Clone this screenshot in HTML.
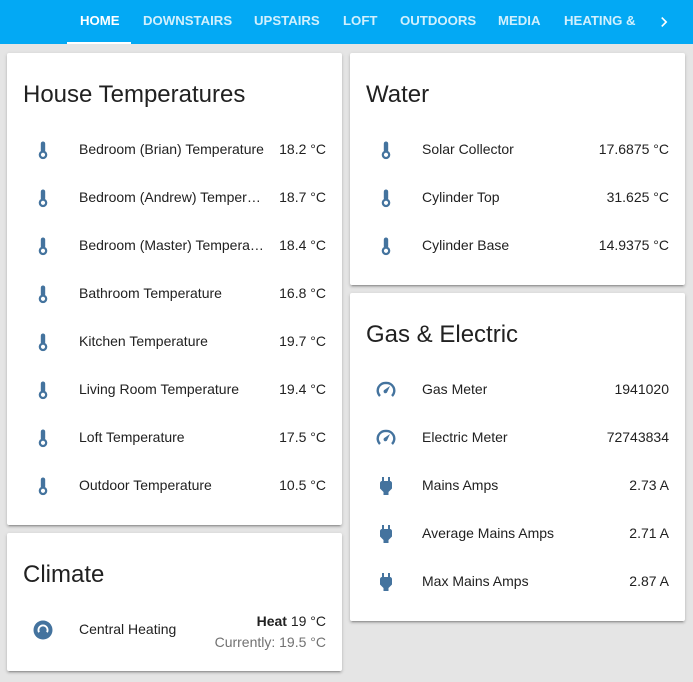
<!DOCTYPE html>
<html><head><meta charset="utf-8"><style>
*{box-sizing:border-box;margin:0;padding:0}
body{width:693px;height:682px;background:#e5e5e5;font-family:"Liberation Sans",sans-serif;position:relative;overflow:hidden;color:#212121}
.hdr{position:absolute;left:0;top:0;width:693px;height:44px;background:#03a9f4}
.tab{position:absolute;top:1px;height:44px;line-height:40px;font-size:13.2px;font-weight:bold;color:rgba(255,255,255,0.82)}
.tab.on{color:#fff}
.ul{position:absolute;left:67px;top:42px;width:64px;height:2px;background:#fff}
.card{position:absolute;background:#fff;border-radius:2px;box-shadow:0 2px 2px rgba(0,0,0,.14),0 1px 4px rgba(0,0,0,.12),0 3px 1px -2px rgba(0,0,0,.2)}
.title{position:absolute;left:16px;font-size:24px;color:#212121}
.row{position:absolute;left:0;right:0;height:40px}
.row svg{position:absolute;left:24px;top:9px}
.nm{position:absolute;left:72px;top:12px;font-size:14px;white-space:nowrap;overflow:hidden;text-overflow:ellipsis}
.val{position:absolute;right:16px;top:12px;font-size:14px}
</style></head><body>
<div class="hdr">
<div class="tab on" style="left:80px">HOME</div>
<div class="tab" style="left:143px">DOWNSTAIRS</div>
<div class="tab" style="left:254px">UPSTAIRS</div>
<div class="tab" style="left:343px">LOFT</div>
<div class="tab" style="left:400px">OUTDOORS</div>
<div class="tab" style="left:498px">MEDIA</div>
<div class="tab" style="left:564px">HEATING &amp;</div>
<svg style="position:absolute;left:654px;top:12px" width="20" height="20" viewBox="0 0 24 24"><path d="M8.6 16.6L13.2 12 8.6 7.4 10 6l6 6-6 6z" fill="#fff"/></svg>
<div class="ul"></div>
</div>

<svg width="0" height="0" style="position:absolute"><defs>
<symbol id="th" viewBox="0 0 24 24"><rect x="9.8" y="3.5" width="4.4" height="11" rx="2.2" fill="#44739e"/><circle cx="12" cy="16.8" r="3.2" fill="#fff" stroke="#44739e" stroke-width="2.2"/></symbol>
<symbol id="ga" viewBox="0 0 24 24"><path d="M6 18A7.6 7.6 0 0 1 12 5a7.6 7.6 0 0 1 6 13" fill="none" stroke="#44739e" stroke-width="2.4"/><path d="M16 8L10.8 11.6a1.9 1.9 0 1 0 2.4 2.5z" fill="#44739e"/></symbol>
<symbol id="pl" viewBox="0 0 24 24"><path d="M16 7V3h-2v4h-4V3H8v4c-1 0-2 1-2 2v5.5L9.5 18v3h5v-3l3.5-3.5V9c0-1-1-2-2-2z" fill="#44739e"/></symbol>
<symbol id="cl" viewBox="0 0 24 24"><circle cx="12" cy="12" r="9.5" fill="#44739e"/><path d="M12 6.5a5.5 5.5 0 0 0-4.8 8.2l1.6-1A3.6 3.6 0 0 1 12 8.4a3.6 3.6 0 0 1 3.2 5.3l1.6 1A5.5 5.5 0 0 0 12 6.5z" fill="#fff"/></symbol>
</defs></svg>

<div class="card" style="left:7px;top:53px;width:335px;height:472px">
<div class="title" style="top:28px">House Temperatures</div>
<div class="row" style="top:76px"><svg width="24" height="24"><use href="#th"/></svg><div class="nm">Bedroom (Brian) Temperature</div><div class="val">18.2 °C</div></div>
<div class="row" style="top:124px"><svg width="24" height="24"><use href="#th"/></svg><div class="nm" style="width:188px">Bedroom (Andrew) Temperature</div><div class="val">18.7 °C</div></div>
<div class="row" style="top:172px"><svg width="24" height="24"><use href="#th"/></svg><div class="nm" style="width:188px">Bedroom (Master) Temperature</div><div class="val">18.4 °C</div></div>
<div class="row" style="top:220px"><svg width="24" height="24"><use href="#th"/></svg><div class="nm">Bathroom Temperature</div><div class="val">16.8 °C</div></div>
<div class="row" style="top:268px"><svg width="24" height="24"><use href="#th"/></svg><div class="nm">Kitchen Temperature</div><div class="val">19.7 °C</div></div>
<div class="row" style="top:316px"><svg width="24" height="24"><use href="#th"/></svg><div class="nm">Living Room Temperature</div><div class="val">19.4 °C</div></div>
<div class="row" style="top:364px"><svg width="24" height="24"><use href="#th"/></svg><div class="nm">Loft Temperature</div><div class="val">17.5 °C</div></div>
<div class="row" style="top:412px"><svg width="24" height="24"><use href="#th"/></svg><div class="nm">Outdoor Temperature</div><div class="val">10.5 °C</div></div>
</div>

<div class="card" style="left:7px;top:533px;width:335px;height:138px">
<div class="title" style="top:28px">Climate</div>
<div class="row" style="top:76px"><svg width="24" height="24"><use href="#cl"/></svg><div class="nm">Central Heating</div>
<div class="val" style="top:4px"><b>Heat</b> 19 °C</div>
<div class="val" style="top:25px;color:#727272">Currently: 19.5 °C</div></div>
</div>

<div class="card" style="left:350px;top:53px;width:335px;height:232px">
<div class="title" style="top:28px">Water</div>
<div class="row" style="top:76px"><svg width="24" height="24"><use href="#th"/></svg><div class="nm">Solar Collector</div><div class="val">17.6875 °C</div></div>
<div class="row" style="top:124px"><svg width="24" height="24"><use href="#th"/></svg><div class="nm">Cylinder Top</div><div class="val">31.625 °C</div></div>
<div class="row" style="top:172px"><svg width="24" height="24"><use href="#th"/></svg><div class="nm">Cylinder Base</div><div class="val">14.9375 °C</div></div>
</div>

<div class="card" style="left:350px;top:293px;width:335px;height:328px">
<div class="title" style="top:28px">Gas &amp; Electric</div>
<div class="row" style="top:76px"><svg width="24" height="24"><use href="#ga"/></svg><div class="nm">Gas Meter</div><div class="val">1941020</div></div>
<div class="row" style="top:124px"><svg width="24" height="24"><use href="#ga"/></svg><div class="nm">Electric Meter</div><div class="val">72743834</div></div>
<div class="row" style="top:172px"><svg width="24" height="24"><use href="#pl"/></svg><div class="nm">Mains Amps</div><div class="val">2.73 A</div></div>
<div class="row" style="top:220px"><svg width="24" height="24"><use href="#pl"/></svg><div class="nm">Average Mains Amps</div><div class="val">2.71 A</div></div>
<div class="row" style="top:268px"><svg width="24" height="24"><use href="#pl"/></svg><div class="nm">Max Mains Amps</div><div class="val">2.87 A</div></div>
</div>
</body></html>
